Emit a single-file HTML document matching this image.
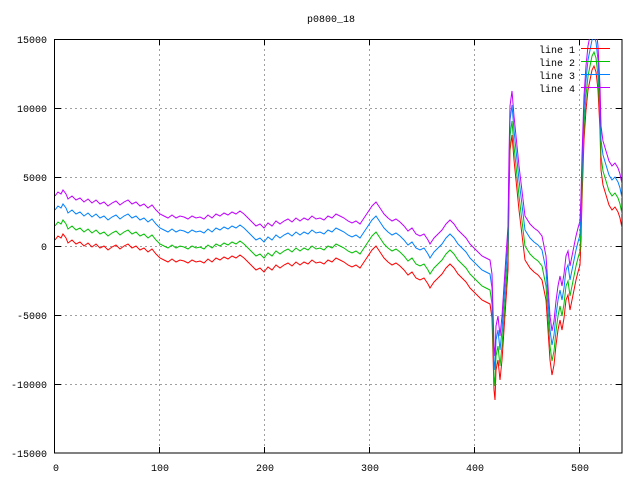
<!DOCTYPE html>
<html><head><meta charset="utf-8"><style>
html,body{margin:0;padding:0;background:#fff;}
svg{display:block}
text{font-family:"Liberation Mono",monospace;font-size:10px;fill:#000}
</style></head><body>
<svg width="640" height="480" viewBox="0 0 640 480" xmlns="http://www.w3.org/2000/svg">
<defs><clipPath id="c"><rect x="55" y="39" width="567" height="414"/></clipPath>
<polyline id="L" fill="none" stroke-width="1" points="55,240 58,236 61,238 63,234 66,238 68,243 72,240 76,244 80,242 84,246 88,243 92,247 96,244 100,248 104,246 108,250 112,247 116,245 120,249 124,246 128,244 132,248 136,246 140,250 144,248 148,252 152,249 156,254 160,258 164,260 168,262 172,259 176,262 180,260 184,261 188,263 192,260 196,262 200,261 204,263 208,259 212,262 216,258 220,260 224,257 228,259 232,256 236,258 240,255 244,258 248,262 252,266 256,270 260,268 264,272 268,267 272,270 276,265 280,268 284,265 288,263 292,266 296,262 300,265 304,262 308,264 312,260 316,263 320,262 324,264 328,260 332,262 336,258 340,260 344,262 348,265 352,267 356,265 360,268 364,262 368,256 372,250 376,246 380,252 384,258 388,262 392,265 396,263 400,266 404,270 408,275 412,272 416,278 420,280 424,278 428,284 430,288 434,282 438,278 442,274 446,268 450,264 454,268 458,274 462,278 466,282 470,288 474,292 478,296 482,300 486,302 490,304 492,318 494,390 495,400 496,370 498,360 500,380 502,360 504,330 506,300 508,270 509,200 510,150 512,135 514,160 516,180 519,210 522,235 525,260 530,268 534,272 538,275 542,280 544,290 546,300 548,330 550,360 552,375 554,365 556,345 558,330 560,320 562,330 564,318 566,300 568,295 570,310 572,300 574,290 576,280 578,272 580,265 581,240 582,200 584,140 586,110 588,90 590,80 592,70 594,66 596,72 598,90 600,130 601,170 603,185 606,195 609,205 612,210 615,207 618,212 620,218 622,228"/></defs>
<g stroke="#a0a0a0" stroke-width="1" stroke-dasharray="2,3" fill="none">
<path d="M55,108.5H622M55,177.5H622M55,246.5H622M55,315.5H622M55,384.5H622"/>
<path d="M159.5,39V453M264.5,39V453M369.5,39V453M474.5,39V453M579.5,39V453"/>
</g>
<g stroke="#000" stroke-width="1" fill="none">
<rect x="54.5" y="39.5" width="567.5" height="413.5"/>
<path d="M55,108.5h6M55,177.5h6M55,246.5h6M55,315.5h6M55,384.5h6M622,108.5h-6M622,177.5h-6M622,246.5h-6M622,315.5h-6M622,384.5h-6M159.5,453v-6M264.5,453v-6M369.5,453v-6M474.5,453v-6M579.5,453v-6M159.5,39v6M264.5,39v6M369.5,39v6M474.5,39v6M579.5,39v6"/>
</g>
<g clip-path="url(#c)">
<use href="#L" stroke="#ff0000"/>
<use href="#L" stroke="#00c000" transform="translate(0,-14)"/>
<use href="#L" stroke="#0080ff" transform="translate(0,-30)"/>
<use href="#L" stroke="#c000ff" transform="translate(0,-44)"/>
</g>
<g text-anchor="end">
<text x="47" y="43">15000</text><text x="47" y="112">10000</text><text x="47" y="181">5000</text><text x="47" y="250">0</text><text x="47" y="319">-5000</text><text x="47" y="388">-10000</text><text x="47" y="457">-15000</text>
</g>
<g text-anchor="middle">
<text x="56" y="471">0</text><text x="160" y="471">100</text><text x="265" y="471">200</text><text x="370" y="471">300</text><text x="475" y="471">400</text><text x="580" y="471">500</text>
<text x="331" y="22">p0800_18</text>
</g>
<g text-anchor="end"><text x="575" y="53">line 1</text><text x="575" y="66">line 2</text><text x="575" y="79">line 3</text><text x="575" y="92">line 4</text></g>
<g stroke-width="1"><path d="M581,48.5h29" stroke="#ff0000"/><path d="M581,61.5h29" stroke="#00c000"/><path d="M581,74.5h29" stroke="#0080ff"/><path d="M581,87.5h29" stroke="#c000ff"/></g>
</svg>
</body></html>
